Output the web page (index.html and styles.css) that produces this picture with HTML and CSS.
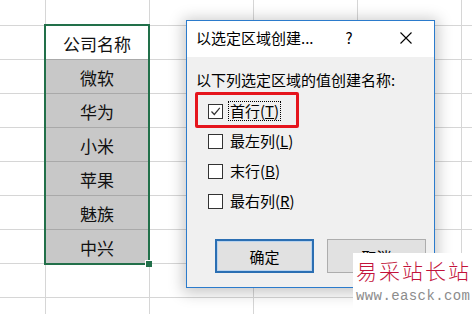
FILE: index.html
```html
<!DOCTYPE html>
<html lang="zh-CN">
<head>
    <meta charset="UTF-8">
    <meta name="viewport" content="width=device-width, initial-scale=1.0">
    <title>以选定区域创建名称</title>
    <link rel="stylesheet" href="styles.css">
</head>
<body>
    <div class="sheet">
        <div class="range">
            <div class="cell head">公司名称</div>
            <div class="cell">微软</div>
            <div class="cell">华为</div>
            <div class="cell">小米</div>
            <div class="cell">苹果</div>
            <div class="cell">魅族</div>
            <div class="cell last">中兴</div>
            <span class="handle"></span>
        </div>
    </div>

    <div class="dialog">
        <div class="titlebar">
            <span class="title">以选定区域创建...</span>
            <span class="help">?</span>
            <span class="close">
                <svg width="12" height="12" viewBox="0 0 12 12">
                    <path d="M0.5 0.5 L11.5 11.5 M11.5 0.5 L0.5 11.5" stroke="#000" stroke-width="1.1" fill="none"/>
                </svg>
            </span>
        </div>
        <div class="body">
            <div class="label">以下列选定区域的值创建名称:</div>
            <div class="options">
                <div class="option marked">
                    <span class="box checked">
                        <svg width="11" height="11" viewBox="0 0 11 11">
                            <path d="M1.5 5.5 L4.3 8.5 L9.8 1.8" stroke="#333" stroke-width="1.2" fill="none"/>
                        </svg>
                    </span>
                    <span class="text focus">首行(<u>T</u>)</span>
                </div>
                <div class="option">
                    <span class="box"></span>
                    <span class="text">最左列(<u>L</u>)</span>
                </div>
                <div class="option">
                    <span class="box"></span>
                    <span class="text">末行(<u>B</u>)</span>
                </div>
                <div class="option">
                    <span class="box"></span>
                    <span class="text">最右列(<u>R</u>)</span>
                </div>
            </div>
            <div class="buttons">
                <button class="btn default">确定</button>
                <button class="btn">取消</button>
            </div>
        </div>
    </div>

    <div class="watermark">
        <div class="brand">易采站长站</div>
        <div class="site">www.easck.com</div>
    </div>
</body>
</html>
```

FILE: styles.css
```css
html, body {
    margin: 0;
    padding: 0;
}
body {
    width: 472px;
    height: 314px;
    overflow: hidden;
    position: relative;
    background-color: #ffffff;
    font-family: "Noto Sans CJK SC", sans-serif;
    color: #000000;
}

/* spreadsheet */
.sheet {
    height: 314px;
    padding-top: 24px;
    padding-left: 44px;
    box-sizing: border-box;
    background-color: #ffffff;
    background-image:
        linear-gradient(to right, #d6d6d6 1px, transparent 1px),
        linear-gradient(to bottom, #d6d6d6 1px, transparent 1px);
    background-size: 104px 34px;
    background-position: 45px 25px;
}
.range {
    position: relative;
    width: 106px;
    border: 2px solid #22704a;
    box-sizing: border-box;
}
.cell {
    height: 34px;
    box-sizing: border-box;
    border-bottom: 1px solid #a9a9a9;
    background-color: #c8c8c8;
    display: flex;
    align-items: center;
    justify-content: center;
    padding-top: 3px;
    font-size: 17px;
    line-height: 20px;
    color: #111111;
}
.cell.head {
    background-color: #ffffff;
}
.cell.last {
    height: 33px;
    border-bottom: none;
}
.handle {
    position: absolute;
    right: -4px;
    bottom: -4px;
    width: 6px;
    height: 6px;
    background-color: #22704a;
    border: 1px solid #ffffff;
    border-right: none;
    border-bottom: none;
}

/* dialog */
.dialog {
    position: absolute;
    left: 186px;
    top: 20px;
    width: 247px;
    border: 1px solid #2b7bcc;
    background-color: #f0f0f0;
    box-shadow: 0 2px 14px 3px rgba(0, 0, 0, 0.22);
    font-size: 15px;
}
.titlebar {
    height: 36px;
    background-color: #ffffff;
    display: flex;
    align-items: center;
    padding-left: 9px;
    padding-right: 13px;
}
.title {
    flex: 1;
    line-height: 20px;
    margin-top: -2px;
}
.help {
    width: 20px;
    text-align: center;
    line-height: 20px;
    margin-top: -2px;
}
.close {
    width: 30px;
    margin-left: 32px;
    display: flex;
    justify-content: center;
    margin-top: -2px;
}
.body {
    padding: 13px 8px 14px 9px;
}
.label {
    line-height: 20px;
}
.options {
    margin-top: 6px;
}
.option {
    position: relative;
    height: 30px;
    display: flex;
    align-items: center;
    padding-left: 12px;
}
.option.marked::before {
    content: "";
    position: absolute;
    left: -1px;
    top: -4px;
    width: 104px;
    height: 36px;
    box-sizing: border-box;
    border: 3px solid #e5141c;
    border-radius: 2px;
}
.box {
    width: 13px;
    height: 13px;
    border: 1px solid #333333;
    background-color: #ffffff;
    display: flex;
    align-items: center;
    justify-content: center;
}
.text {
    margin-left: 6px;
    line-height: 18px;
    padding: 0 1px;
}
.text.focus {
    outline: 1px dotted #000000;
}
.buttons {
    margin-top: 23px;
    display: flex;
    justify-content: flex-end;
    gap: 13px;
}
.btn {
    width: 99px;
    height: 34px;
    background-color: #e1e1e1;
    border: 1px solid #adadad;
    font-family: inherit;
    font-size: 15px;
    color: #000000;
    padding: 0;
}
.btn.default {
    border: 2px solid #2b6fb3;
    box-shadow: inset 0 0 0 1px #b9d3ee;
}

/* watermark */
.watermark {
    position: absolute;
    right: 0;
    bottom: 0;
    width: 119px;
    height: 61px;
    background-color: #ffffff;
    padding-left: 3px;
    box-sizing: border-box;
}
.brand {
    margin-top: 4px;
    font-size: 21px;
    line-height: 26px;
    letter-spacing: 2px;
    color: #c3123a;
    font-weight: 300;
}
.site {
    margin-top: 5px;
    font-family: "Liberation Mono", monospace;
    font-size: 14px;
    line-height: 16px;
    letter-spacing: 0.4px;
    color: #8c8c8c;
}
```
